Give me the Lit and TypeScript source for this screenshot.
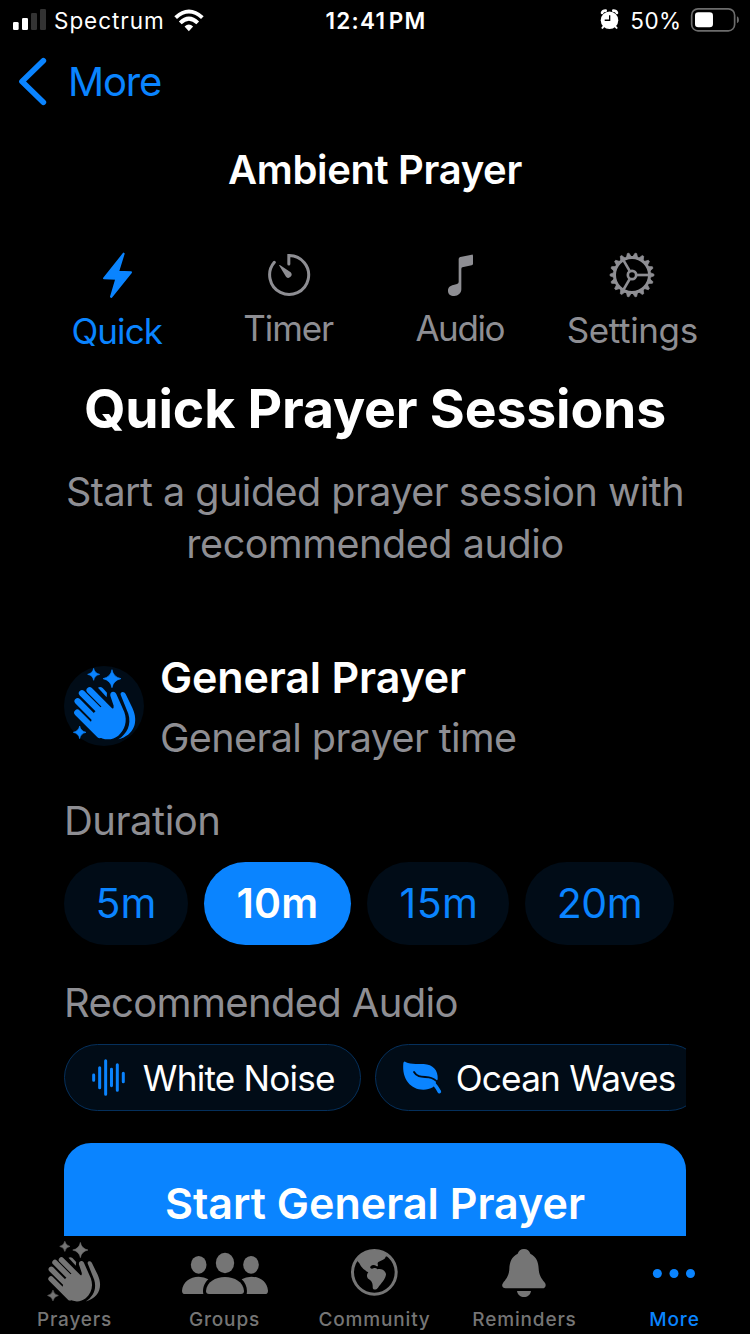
import { LitElement, html, svg, css } from "lit";
import { customElement } from "lit/decorators.js";
import { classMap } from "lit/directives/class-map.js";

const star = (x: number, y: number, r: number) => {
  const k = r * 0.2;
  return svg`<path d="M${x},${y - r} Q${x + k * 0.7},${y - k} ${x + r},${y} Q${x + k * 0.7},${y + k} ${x},${y + r} Q${x - k * 0.7},${y + k} ${x - r},${y} Q${x - k * 0.7},${y - k} ${x},${y - r}Z" stroke="currentColor" stroke-width="2" stroke-linejoin="round"/>`;
};

const hands = (cls: string) => html`<svg class=${cls} viewBox="70 53 190 216" fill="currentColor">
  ${star(187, 85, 27)}${star(132, 72, 18)}${star(90, 246, 19)}
  <g fill="none" stroke="currentColor" stroke-width="19" stroke-linecap="round">
    <path d="M83,187 L150,254"/><path d="M84,153 L160,229"/><path d="M97,129 L175,207"/><path d="M120,120 L190,190"/>
  </g>
  <path d="M124,214 L134,186 L158,166 L186,174 Q193,178 192,166 L182,136 C180,123 195,120 200,131 L224,185 C234,213 226,238 206,256 C188,271 160,270 143,256 L118,234Z"/>
  <path d="M213,133 C211,123 224,122 228,131 L248,172 C268,215 254,254 206,267 C232,250 246,224 236,190Z"/>
  <path d="M145,112 Q152,108 159,113 L172,127 L171,141Z"/>
</svg>`;

const signal = html`<svg class="signal" viewBox="39 27 99 63" fill="#fff">
  <rect x="39" y="66" width="17" height="24" rx="4"/><rect x="66" y="54" width="18" height="36" rx="4"/>
  <g fill="#333"><rect x="93" y="39" width="18" height="51" rx="4"/><rect x="120" y="27" width="18" height="63" rx="4"/></g>
</svg>`;

const wifi = html`<svg class="wifi" viewBox="520 27 91 68" fill="none" stroke="#fff">
  <path d="M525,53 Q565,16 606,53" stroke-width="12"/>
  <path d="M539,69 Q565,43 592,69" stroke-width="12"/>
  <path d="M552,80 Q565,68 578,80 L565,94Z" fill="#fff" stroke="none"/>
</svg>`;

const alarm = html`<svg class="alarm" viewBox="124 27 57 62">
  <g stroke="#fff" stroke-width="6" stroke-linecap="round"><path d="M136,78 L131,84"/><path d="M168,78 L174,84"/></g>
  <g fill="none" stroke="#fff" stroke-width="8" stroke-linecap="round"><path d="M130,39 Q132,32 141,32"/><path d="M175,39 Q173,32 164,32"/></g>
  <circle cx="152.500" cy="61" r="26.500" fill="#fff"/>
  <path d="M153,46 V61 H138" fill="none" stroke="#000" stroke-width="4"/>
</svg>`;

const battery = html`<svg class="battery" viewBox="393 23 145 71">
  <rect x="395" y="25.500" width="129" height="66" rx="19" fill="none" stroke="#6c6c6c" stroke-width="5"/>
  <rect x="405" y="36" width="54" height="45" rx="10" fill="#fff"/>
  <path d="M531,48 Q537,50 537,59 Q537,67 531,69Z" fill="#6c6c6c"/>
</svg>`;

const bolt = html`<svg class="tab-icon" viewBox="102 33 144 144" fill="currentColor">
  <path d="M191,41 L174,95.500 L213,97 L154,171 L153,170 L169,116.500 L132,115 Z" stroke="currentColor" stroke-width="6" stroke-linejoin="round"/>
</svg>`;

const timer = html`<svg class="tab-icon" viewBox="615 33 144 144" fill="none" stroke="currentColor">
  <path d="M686.500,72 V46.500 A58.500,58.500 0 1 1 643,67" stroke-width="9" stroke-linecap="round"/>
  <path d="M657,76 Q659,74 663,77 L692,97 A9.500,9.500 0 1 1 678,110Z" fill="currentColor" stroke="none"/>
</svg>`;

const note = html`<svg class="tab-icon" viewBox="111 33 144 144" fill="currentColor">
  <path d="M176,57 Q176,52 181,51 L215,44 Q219,43 219,48 V71 Q219,75 215,76 L187,82 Q184,83 184,87 V148 C184,160 174,168 163,168 C151,168 144,162 144,152 C144,142 151,137 160,135 L171,132 Q176,131 176,126Z"/>
</svg>`;

const gear = html`<svg class="tab-icon" viewBox="623 34 144 144" fill="none" stroke="currentColor">
  <circle cx="695" cy="106" r="52.500" stroke-width="9"/>
  <circle cx="695" cy="106" r="12.500" stroke-width="8"/>
  ${[0, 120, 240].map((a) => svg`<path d="M710,106 H745" stroke-width="8" transform="rotate(${a} 695 106)"/>`)}
  ${Array.from({ length: 18 }, (_, i) => svg`<path d="M750,99 L761,103.500 V108.500 L750,113Z" fill="currentColor" stroke="currentColor" stroke-width="2" stroke-linejoin="round" transform="rotate(${i * 20} 695 106)"/>`)}
</svg>`;

const wave = html`<svg class="wave" viewBox="125 87 100 111" stroke="currentColor" stroke-width="9" stroke-linecap="round">
  <path d="M130,135 V151 M148,113 V173 M166,92 V193 M183.500,118 V167 M201,104 V181 M219,130 V155"/>
</svg>`;

const leaf = html`<svg class="leaf" viewBox="128 94 116 99">
  <path d="M129,100 Q131,92 137,98 C149,105 168,102 190,103 C218,104 234,122 232,149 L219,172 C208,178 200,180 189,180 C152,180 124,150 129,100Z" fill="currentColor"/>
  <path d="M161,127 C172,147 196,139 213,145 Q230,151 238,168" fill="none" stroke="#010c17" stroke-width="5.500" stroke-linecap="round"/>
  <path d="M204,153 C221,157 229,170 237,186" fill="none" stroke="currentColor" stroke-width="11" stroke-linecap="round"/>
</svg>`;

const groups = html`<svg class="groups" viewBox="486 69 258 123" fill="currentColor">
  <ellipse cx="536" cy="104.500" rx="23.500" ry="26.500"/><ellipse cx="693" cy="104.500" rx="23.500" ry="26.500"/>
  <ellipse cx="615" cy="99" rx="27.500" ry="30.500"/>
  <path d="M558,183 C560,156 586,141 615,141 C644,141 670,156 672,183 Q672,192 663,192 H567 Q558,192 558,183Z"/>
  <path d="M486,182 C488,156 510,140 536,140 Q553,140 565,148 C552,160 547,176 550,192 H495 Q486,192 486,182Z"/>
  <path d="M744,182 C742,156 720,140 694,140 Q677,140 665,148 C678,160 683,176 680,192 H735 Q744,192 744,182Z"/>
</svg>`;

const globe = html`<svg class="globe" viewBox="153 58 140 140" fill="currentColor">
  <circle cx="223" cy="128" r="65.500" fill="none" stroke="currentColor" stroke-width="9"/>
  <path d="M171,93 C184,70 204,61 223,61 C240,61 253,67 264,78 L257,81 Q256,87 249,90 L235,97 Q231,100 234,107 Q233,112 229,109 Q223,105 216,107 Q209,110 211,115 Q215,119 222,115 Q229,114 232,119 C245,115 257,124 258,134 C257,148 243,162 234,174 C228,182 218,182 218,172 C219,160 214,153 206,148 C199,143 200,133 205,128 Q190,121 183,110 Q180,100 171,93Z"/>
</svg>`;

const bell = html`<svg class="bell" viewBox="605 57 131 144" fill="currentColor">
  <path d="M671,57 C681,57 687,63 690,71 C708,80 714,95 715,116 C716,140 727,149 734,159 C739,167 734,175 726,175 H616 C607,175 602,167 608,159 C615,149 626,140 627,116 C628,95 634,80 652,71 C655,63 661,57 671,57Z"/>
  <path d="M650,183 H692 C690,195 681,201 671,201 C661,201 652,195 650,183Z"/>
</svg>`;

const dots = html`<svg class="dots" viewBox="279 417 126 27" fill="currentColor">
  <circle cx="292" cy="430.500" r="13.500"/><circle cx="342" cy="430.500" r="13.500"/><circle cx="391.500" cy="430.500" r="13.500"/>
</svg>`;

const modes = [
  { id: "quick", label: "Quick", icon: bolt },
  { id: "timer", label: "Timer", icon: timer },
  { id: "audio", label: "Audio", icon: note },
  { id: "settings", label: "Settings", icon: gear },
];

const durations = ["5m", "10m", "15m", "20m"];

const sections = [
  { id: "prayers", label: "Prayers", icon: hands("hands-small") },
  { id: "groups-tab", label: "Groups", icon: groups },
  { id: "community", label: "Community", icon: globe },
  { id: "reminders", label: "Reminders", icon: bell },
  { id: "more", label: "More", icon: dots },
];

@customElement("app-root")
class AppRoot extends LitElement {
  static styles = css`
    :host { display: flex; flex-direction: column; width: 750px; height: 1334px; overflow: hidden; background: #000; color: #fff; font-family: Inter, "Liberation Sans", sans-serif; white-space: nowrap; }
    * { box-sizing: border-box; }
    svg { display: block; flex: none; overflow: visible; }
    .status { display: grid; grid-template-columns: 1fr auto 1fr; align-items: center; height: 41px; padding: 0 11px 0 13px; font-size: 22.5px; line-height: 41px; }
    .left, .right { display: flex; align-items: center; }
    .right { justify-content: flex-end; }
    .signal { width: 33px; height: 21px; margin-top: -2px; }
    .carrier { margin-left: 8px; letter-spacing: 0.95px; }
    .wifi { width: 30px; height: 22.500px; margin-left: 9.500px; }
    .clock { font-weight: 600; font-size: 22.5px; letter-spacing: 1.25px; word-spacing: -4.500px; }
    .alarm { width: 19px; height: 20.500px; margin: -2px 1px 0 0; }
    .percent { margin-left: 10px; letter-spacing: 0.5px; }
    .battery { width: 48.300px; height: 23.700px; margin-left: 9px; margin-top: -1px; }
    .nav { display: flex; align-items: center; height: 81px; padding-left: 19px; color: #0a84ff; }
    .back { width: 27px; height: 47px; margin-top: -1px; }
    .back-label { margin-left: 22px; font-size: 40px; letter-spacing: -1.2px; line-height: 81px; }
    .heading { height: 96px; line-height: 96px; text-align: center; font-size: 40px; font-weight: 600; letter-spacing: -0.35px; }
    .modes { display: grid; grid-template-columns: repeat(4, 1fr); height: 146px; padding: 33px 32px 0; color: #8e8e93; }
    .mode { display: flex; flex-direction: column; align-items: center; font-size: 35px; line-height: 44px; }
    .mode.active { color: #0a84ff; }
    .tab-icon { width: 48px; height: 48px; margin-bottom: 7px; }
    .mode.quick .tab-icon { margin-bottom: 10px; }
    .mode.settings .tab-icon { margin-bottom: 9px; }
    .mode span { margin-left: -2px; }
    .mode.quick { letter-spacing: -0.9px; }
    .mode.timer { letter-spacing: -1.1px; }
    .mode.audio { letter-spacing: -1.4px; }
    .mode.settings { letter-spacing: -0.36px; }
    .mode.settings span { margin-left: 0; }
    .content { flex: 1; min-height: 0; overflow: hidden; padding: 0 64px; }
    .title { margin: 5px 0 0 -32px; width: 686px; font-size: 53.5px; line-height: 80px; font-weight: 700; text-align: center; letter-spacing: -0.16px; }
    .intro { margin: 17px 0 0 -32px; width: 686px; font-size: 39.5px; line-height: 52px; text-align: center; color: #8e8e93; letter-spacing: -0.52px; }
    .intro-end { letter-spacing: -0.42px; }
    .session { display: flex; align-items: center; gap: 16px; height: 120px; margin-top: 77px; }
    .badge { display: grid; place-items: center; width: 80px; height: 80px; margin-top: -3px; border-radius: 50%; background: #010c17; color: #0a84ff; }
    .hands { width: 63.300px; height: 72px; margin: -3px 0 0 2px; }
    .name { font-size: 43px; font-weight: 600; line-height: 60px; letter-spacing: -0.16px; }
    .about { font-size: 39.5px; line-height: 60px; padding-top: 1px; letter-spacing: -0.6px; color: #8e8e93; }
    .label { font-size: 40px; line-height: 50px; color: #8e8e93; }
    .duration-label { margin-top: 29px; letter-spacing: -0.5px; }
    .durations { display: flex; gap: 16px; margin-top: 16px; }
    .pill { height: 83px; line-height: 83px; border-radius: 41.5px; background: #010c17; color: #0a84ff; font-size: 41px; text-align: center; }
    .d5m { width: 124px; letter-spacing: 0; }
    .d10m { width: 147px; letter-spacing: 0.3px; }
    .d15m { width: 142px; letter-spacing: 0.5px; padding-left: 2px; }
    .d20m { width: 149px; letter-spacing: -0.5px; }
    .pill.chosen { background: #0a84ff; color: #fff; font-weight: 600; }
    .audio-label { margin-top: 33px; letter-spacing: -0.68px; }
    .chips { display: flex; gap: 14px; margin-top: 16px; overflow: hidden; }
    .chip { display: flex; align-items: center; flex: none; height: 67px; border: 1px solid #05305c; border-radius: 33.5px; background: #010c17; color: #0a84ff; }
    .noise { width: 297px; padding-left: 27px; }
    .ocean { width: 328px; padding-left: 27px; }
    .wave { width: 33.300px; height: 37px; }
    .leaf { width: 38.700px; height: 33px; }
    .chip-text { color: #fff; font-size: 35.2px; line-height: 66px; margin-left: 17.500px; letter-spacing: -0.8px; }
    .ocean .chip-text { margin-left: 14px; letter-spacing: -0.8px; }
    .start { height: 120px; margin-top: 32px; border-radius: 27px; background: #0a84ff; font-size: 43px; line-height: 121px; font-weight: 600; text-align: center; }
    .tabbar { display: grid; grid-template-columns: repeat(5, 150px); height: 98px; margin-left: -1px; color: #757575; }
    .section { display: grid; grid-template-rows: 74px 20px; justify-items: center; align-items: center; font-size: 19px; line-height: 20px; font-weight: 450; letter-spacing: 0.85px; }
    .section span { margin-left: 1px; }
    .section.active { color: #0a84ff; }
    .hands-small { width: 54.300px; height: 61px; margin: -4px 0 0 1px; }
    .groups { width: 86px; height: 41px; margin: 1px 0 0 1px; }
    .globe { width: 46.700px; height: 46.700px; margin-top: -1px; }
    .bell { width: 43.700px; height: 48px; margin-top: -1px; }
    .dots { width: 42px; height: 9px; margin-top: 1px; }
  `;

  render() {
    return html`
      <div class="status">
        <div class="left">${signal}<span class="carrier">Spectrum</span>${wifi}</div>
        <span class="clock">12:41 PM</span>
        <div class="right">${alarm}<span class="percent">50%</span>${battery}</div>
      </div>
      <div class="nav">
        <svg class="back" viewBox="57 172 81 140" fill="none" stroke="currentColor" stroke-width="17" stroke-linecap="round" stroke-linejoin="round"><path d="M130,180 L66,242 L130,304"/></svg>
        <span class="back-label">More</span>
      </div>
      <div class="heading">Ambient Prayer</div>
      <div class="modes">
        ${modes.map((m) => html`<div class=${classMap({ mode: true, [m.id]: true, active: m.id === "quick" })}>${m.icon}<span>${m.label}</span></div>`)}
      </div>
      <div class="content">
        <div class="title">Quick Prayer Sessions</div>
        <div class="intro">Start a guided prayer session with<br><span class="intro-end">recommended audio</span></div>
        <div class="session">
          <div class="badge">${hands("hands")}</div>
          <div><div class="name">General Prayer</div><div class="about">General prayer time</div></div>
        </div>
        <div class="label duration-label">Duration</div>
        <div class="durations">
          ${durations.map((d) => html`<div class=${classMap({ pill: true, ["d" + d]: true, chosen: d === "10m" })}>${d}</div>`)}
        </div>
        <div class="label audio-label">Recommended Audio</div>
        <div class="chips">
          <div class="chip noise">${wave}<span class="chip-text">White Noise</span></div>
          <div class="chip ocean">${leaf}<span class="chip-text">Ocean Waves</span></div>
        </div>
        <div class="start">Start General Prayer</div>
      </div>
      <div class="tabbar">
        ${sections.map((s) => html`<div class=${classMap({ section: true, active: s.id === "more" })}>${s.icon}<span>${s.label}</span></div>`)}
      </div>
    `;
  }
}
